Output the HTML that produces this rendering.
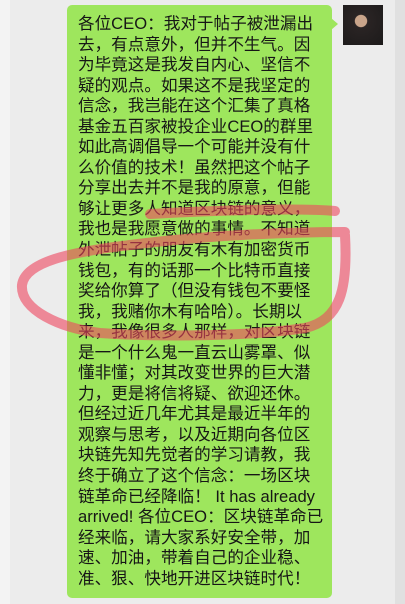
<!DOCTYPE html>
<html><head><meta charset="utf-8"><style>
html,body{margin:0;padding:0;}
body{width:405px;height:604px;background:#ececec;position:relative;overflow:hidden;font-family:"Liberation Sans","Noto Sans CJK SC",sans-serif;}
.l{position:absolute;left:0;top:0;width:10px;height:604px;background:#f3f3f3}
.r{position:absolute;right:0;top:0;width:10px;height:604px;background:#e0e0e0}
.b{position:absolute;left:67px;top:5px;width:265px;height:593px;background:#9ee65d;border-radius:5px}
.nub{position:absolute;left:331px;top:18px;width:0;height:0;border-top:6px solid transparent;border-bottom:6px solid transparent;border-left:7px solid #9ee65d}
.av{position:absolute;left:343px;top:5px;width:40px;height:40px;background:radial-gradient(circle at 45% 40%,#c9a48a 0 18%,#2a2424 20%,#1c1a1a 100%);}
.t{position:absolute;left:78px;top:14px;font-size:16.6px;line-height:20.55px;color:#161616;white-space:nowrap}
svg{position:absolute;left:0;top:0}
</style></head><body>
<div class="l"></div><div class="r"></div>
<div class="b"></div><div class="nub"></div>
<div class="av"></div>
<div class="t">
各位CEO：我对于帖子被泄漏出<br>去，有点意外，但并不生气。因<br>为毕竟这是我发自内心、坚信不<br>疑的观点。如果这不是我坚定的<br>信念，我岂能在这个汇集了真格<br>基金五百家被投企业CEO的群里<br>如此高调倡导一个可能并没有什<br>么价值的技术！虽然把这个帖子<br>分享出去并不是我的原意，但能<br>够让更多人知道区块链的意义，<br>我也是我愿意做的事情。不知道<br>外泄帖子的朋友有木有加密货币<br>钱包，有的话那一个比特币直接<br>奖给你算了（但没有钱包不要怪<br>我，我赌你木有哈哈）。长期以<br>来，我像很多人那样，对区块链<br>是一个什么鬼一直云山雾罩、似<br>懂非懂；对其改变世界的巨大潜<br>力，更是将信将疑、欲迎还休。<br>但经过近几年尤其是最近半年的<br>观察与思考，以及近期向各位区<br>块链先知先觉者的学习请教，我<br>终于确立了这个信念：一场区块<br>链革命已经降临！ It has already<br>arrived! 各位CEO：区块链革命已<br>经来临，请大家系好安全带，加<br>速、加油，带着自己的企业稳、<br>准、狠、快地开进区块链时代！
</div>
<svg width="405" height="604"><path d="M150 214 C220 210 300 208 335 211 M345 232 C280 232 200 236 130 245 C70 252 25 262 22 285 C20 310 60 328 100 333 C170 338 260 335 305 328 C340 320 348 290 345 235" fill="none" stroke="rgba(238,70,95,0.6)" stroke-width="10" stroke-linecap="round"/></svg>
</body></html>
